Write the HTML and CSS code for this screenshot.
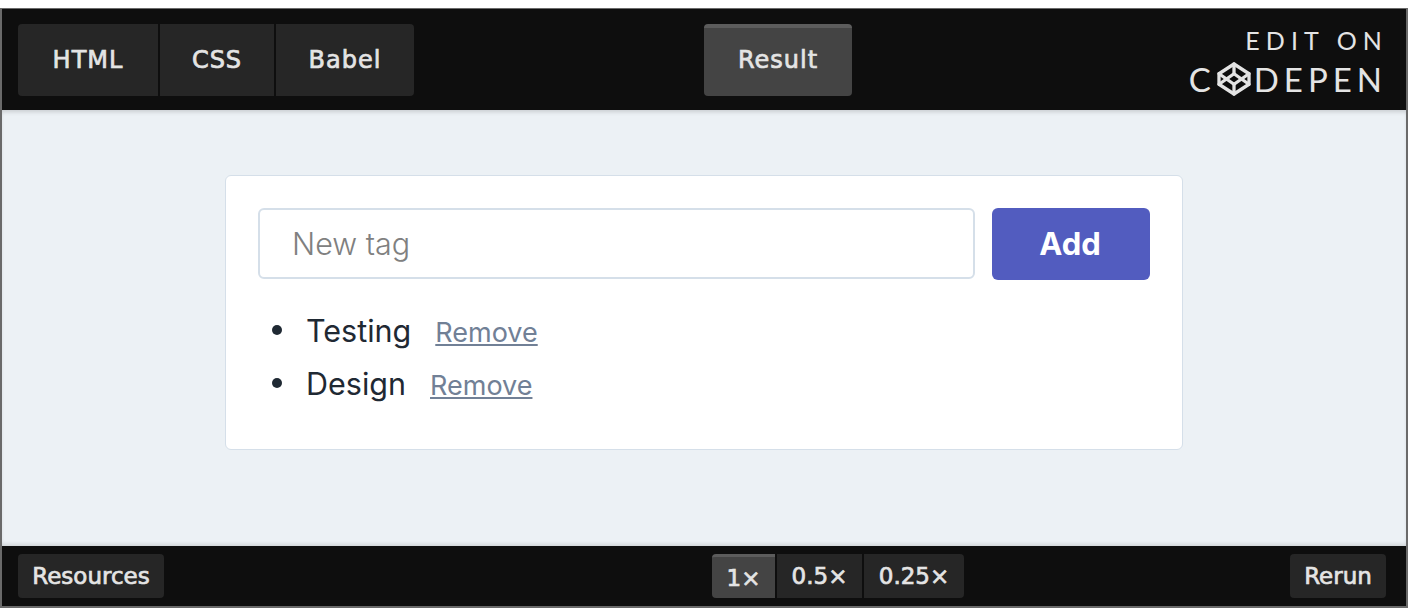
FILE: index.html
```html
<!DOCTYPE html>
<html lang="en">
<head>
  <meta charset="UTF-8">
  <title>Tags - CodePen embed</title>
  <link rel="stylesheet" href="styles.css">
</head>
<body>
  <div class="embed">
    <!-- Top bar -->
    <div class="top-bar">
      <div class="top-left">
        <div class="btn-group">
          <div class="tab">HTML</div>
          <div class="tab tab-css">CSS</div>
          <div class="tab tab-babel">Babel</div>
        </div>
      </div>
      <div class="tab tab-result active">Result</div>
      <div class="edit-on">
        <span class="edit-label">EDIT ON</span>
        <span class="edit-logo">C<svg class="logo-icon" viewBox="0 0 24 24" fill="none" stroke="#e4e4e4" stroke-width="2.2" stroke-linejoin="round" stroke-linecap="round"><polygon points="12 2 22 8.5 22 15.5 12 22 2 15.5 2 8.5"/><line x1="12" y1="22" x2="12" y2="15.5"/><polyline points="22 8.5 12 15.5 2 8.5"/><polyline points="2 15.5 12 8.5 22 15.5"/><line x1="12" y1="2" x2="12" y2="8.5"/></svg>DEPEN</span>
      </div>
    </div>

    <!-- Result -->
    <div class="result">
      <div class="card">
        <form class="tag-form">
          <input class="tag-input" type="text" placeholder="New tag">
          <button class="add-button" type="button">Add</button>
        </form>
        <ul class="tag-list">
          <li><span class="tag-name">Testing</span><a class="remove-link" href="#">Remove</a></li>
          <li><span class="tag-name">Design</span><a class="remove-link" href="#">Remove</a></li>
        </ul>
      </div>
    </div>

    <!-- Bottom bar -->
    <div class="bottom-bar">
      <div class="bottom-left">
        <div class="small-btn btn-resources">Resources</div>
      </div>
      <div class="btn-group">
        <div class="small-btn zoom-one active">1×</div>
        <div class="small-btn zoom-half">0.5×</div>
        <div class="small-btn zoom-quarter">0.25×</div>
      </div>
      <div class="small-btn btn-rerun">Rerun</div>
    </div>
  </div>
</body>
</html>
```

FILE: styles.css
```css
/* General reset */
body {
  margin: 0;
  background-color: #fff;
  font-family: "DejaVu Sans", sans-serif;
}
/* Frame */
.embed {
  margin: 8px 4px 0 0;
  height: 600px;
  border: 2px solid #6a6a6a;
  border-top-width: 1px;
  display: flex;
  flex-direction: column;
  box-sizing: border-box;
  overflow: hidden;
}
/* Top bar */
.top-bar {
  height: 101px;
  flex: none;
  padding: 15px 24px 0 16px;
  box-sizing: border-box;
  background-color: #0e0e0e;
  display: flex;
  align-items: flex-start;
}
.top-left {
  width: 686px;
  flex: none;
}
.btn-group {
  display: inline-flex;
  gap: 2px;
}
.tab {
  width: 140px;
  height: 72px;
  display: flex;
  align-items: center;
  justify-content: center;
  background-color: #262626;
  color: #e4e4e4;
  font-size: 24px;
  letter-spacing: 1px;
  -webkit-text-stroke: 0.7px #e4e4e4;
  box-sizing: border-box;
}
.tab:first-child {
  border-radius: 4px 0 0 4px;
}
.tab-css {
  width: 114px;
}
.tab-babel {
  width: 138px;
  border-radius: 0 4px 4px 0;
}
.tab-result {
  width: 148px;
  padding-bottom: 4px;
  border-radius: 4px;
}
.active {
  background-color: #444;
  border-top: 4px solid #5c5c5c;
}
/* Edit on codepen */
.edit-on {
  margin-left: auto;
  margin-top: 2px;
  display: flex;
  flex-direction: column;
  align-items: flex-end;
  color: #e4e4e4;
  font-family: Lato, sans-serif;
}
.edit-label {
  font-size: 25px;
  line-height: 28px;
  letter-spacing: 6.1px;
  margin-right: -6px;
}
.edit-logo {
  display: flex;
  align-items: center;
  margin-top: 7px;
  font-size: 33px;
  line-height: 36px;
  letter-spacing: 5px;
  margin-right: -5px;
}
.logo-icon {
  width: 36px;
  height: 36px;
  margin-right: 2px;
}
/* Result */
.result {
  flex: 1;
  padding-top: 65px;
  background-color: #ecf1f5;
  box-shadow: inset 0 4px 4px -2px rgba(0, 0, 0, 0.15), inset 0 -4px 4px -2px rgba(0, 0, 0, 0.12);
}
.card {
  width: 958px;
  height: 275px;
  margin-left: 223px;
  padding: 32px;
  box-sizing: border-box;
  background-color: #fff;
  border: 1px solid #d5dfe9;
  border-radius: 6px;
  font-family: Inter, sans-serif;
}
.tag-form {
  display: flex;
  gap: 17px;
}
.tag-input {
  flex: 1;
  min-width: 0;
  height: 71px;
  padding: 0 32px;
  box-sizing: border-box;
  border: 2px solid #d5dfe9;
  border-radius: 6px;
  background-color: #fff;
  font-family: Inter, sans-serif;
  font-size: 30.5px;
  font-weight: 300;
}
.tag-input::placeholder {
  color: #808080;
}
.add-button {
  width: 158px;
  height: 72px;
  padding: 0 8px 2px 6px;
  border: none;
  border-radius: 6px;
  background-color: #525cbf;
  color: #fff;
  font-family: Inter, sans-serif;
  font-size: 31px;
  font-weight: 700;
}
/* Tag list */
.tag-list {
  margin: 24px 0 0;
  padding-left: 14px;
  list-style: none;
  color: #1f2933;
  font-size: 30.5px;
  line-height: 53px;
}
.tag-list li {
  height: 53px;
}
.tag-list li::before {
  content: "";
  display: inline-block;
  width: 10px;
  height: 10px;
  margin-right: 24px;
  border-radius: 50%;
  background-color: #1f2933;
  vertical-align: 7px;
}
.tag-name {
  margin-right: 24px;
}
.remove-link {
  color: #718096;
  font-size: 27px;
}
/* Bottom bar */
.bottom-bar {
  height: 60px;
  flex: none;
  padding: 8px 20px 0 16px;
  box-sizing: border-box;
  background-color: #0e0e0e;
  display: flex;
  align-items: flex-start;
}
.bottom-left {
  width: 694px;
  flex: none;
}
.small-btn {
  height: 44px;
  display: flex;
  align-items: center;
  justify-content: center;
  box-sizing: border-box;
  background-color: #262626;
  color: #e4e4e4;
  font-size: 23px;
  -webkit-text-stroke: 0.7px #e4e4e4;
  border-radius: 4px;
}
.btn-resources {
  width: 146px;
}
.btn-rerun {
  width: 96px;
  margin-left: auto;
}
.zoom-one {
  width: 63px;
  border-radius: 4px 0 0 4px;
}
.small-btn.active {
  background-color: #444;
  border-top-width: 3px;
}
.zoom-half {
  width: 85px;
  border-radius: 0;
}
.zoom-quarter {
  width: 100px;
  border-radius: 0 4px 4px 0;
}
```
